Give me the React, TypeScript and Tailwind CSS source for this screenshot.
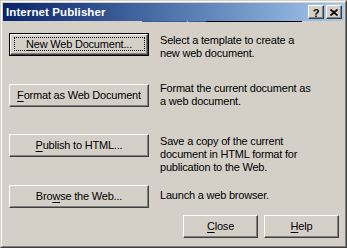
import React from "react";

const face = "bg-[#d4d0c8]";

function Btn({
  children,
  def = false,
  w = "w-[140px]",
}: {
  children: React.ReactNode;
  def?: boolean;
  w?: string;
}) {
  if (def) {
    return (
      <div className={`${w} h-[23px] border border-black shrink-0`}>
        <div className="relative h-full border border-t-white border-l-white border-r-[#404040] border-b-[#404040] shadow-[inset_-1px_-1px_0_#808080] flex items-center justify-center">
          <div className="absolute left-[3px] right-[2px] top-[2px] bottom-[3px] border border-dotted border-black" />
          <span className="relative">{children}</span>
        </div>
      </div>
    );
  }
  return (
    <div
      className={`${w} h-[23px] shrink-0 border border-t-white border-l-white border-r-[#404040] border-b-[#404040] shadow-[inset_-1px_-1px_0_#808080] flex items-center justify-center`}
    >
      <span>{children}</span>
    </div>
  );
}

function U({ children }: { children: React.ReactNode }) {
  return <span className="underline underline-offset-[2px] decoration-1">{children}</span>;
}

function TitleBtn({ children }: { children: React.ReactNode }) {
  return (
    <div className="w-[16px] h-[14px] bg-[#d4d0c8] border border-t-white border-l-white border-r-[#404040] border-b-[#404040] shadow-[inset_-1px_-1px_0_#808080] flex items-center justify-center text-black">
      {children}
    </div>
  );
}

export default function App() {
  return (
    <div className="w-[347px] h-[248px] font-['Liberation_Sans',Arial,sans-serif] text-[11px] leading-[13px] text-black tracking-[-0.2px]">
      <div className={`w-full h-full ${face} border border-t-[#d4d0c8] border-l-[#d4d0c8] border-r-[#404040] border-b-[#404040]`}>
        <div className="w-full h-full border border-t-white border-l-white border-r-[#808080] border-b-[#808080] p-[1px] flex flex-col">
          {/* Title bar */}
          <div className="h-[18px] shrink-0 bg-linear-to-r from-[#0a246a] to-[#a6caf0] flex items-center justify-between">
            <span className="pl-[3px] text-white font-bold text-[11.5px] tracking-[0.1px]">
              Internet Publisher
            </span>
            <div className="flex items-center gap-[2px] pr-[2px]">
              <TitleBtn>
                <span className="font-bold text-[11px] leading-[10px] tracking-[0px] mt-[1px]">?</span>
              </TitleBtn>
              <TitleBtn>
                <svg width="8" height="7" viewBox="0 0 8 7" className="mt-[1px]">
                  <path d="M0.5 0.5 L7.5 6.5 M7.5 0.5 L0.5 6.5" stroke="black" strokeWidth="1.7" />
                </svg>
              </TitleBtn>
            </div>
          </div>
          {/* artifact line */}
          <div className="h-[1px] shrink-0 flex pl-[139px]">
            <div className="w-[45px] bg-[#3a5a9c]" />
            <div className="w-[1px] bg-white" />
            <div className="w-[18px] bg-[#3a5a9c]" />
            <div className="w-[96px] bg-black" />
          </div>

          <div className="flex flex-col pl-[6px] pt-[11px]">
            <div className="h-[51px] flex items-start">
              <Btn def>
                <U>N</U>ew Web Document...
              </Btn>
              <p className="ml-[11px] mt-[1px] whitespace-nowrap">
                Select a template to create a
                <br />
                new web document.
              </p>
            </div>
            <div className="h-[50px] flex items-start">
              <Btn>
                <U>F</U>ormat as Web Document
              </Btn>
              <p className="ml-[11px] -mt-[2px] whitespace-nowrap">
                Format the current document as
                <br />a web document.
              </p>
            </div>
            <div className="h-[51px] flex items-start">
              <Btn>
                <U>P</U>ublish to HTML...
              </Btn>
              <p className="ml-[11px] mt-[1px] whitespace-nowrap">
                Save a copy of the current
                <br />
                document in HTML format for
                <br />
                publication to the Web.
              </p>
            </div>
            <div className="h-[30px] flex items-start">
              <Btn>
                Bro<U>w</U>se the Web...
              </Btn>
              <p className="ml-[11px] mt-[4px] whitespace-nowrap">Launch a web browser.</p>
            </div>
            <div className="flex justify-end gap-[6px] pr-[5px]">
              <Btn w="w-[75px]">
                <U>C</U>lose
              </Btn>
              <Btn w="w-[75px]">
                <U>H</U>elp
              </Btn>
            </div>
          </div>
        </div>
      </div>
    </div>
  );
}
